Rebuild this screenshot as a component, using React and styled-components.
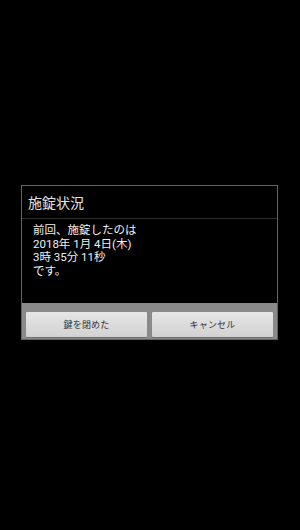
import styled, { createGlobalStyle } from "styled-components";

const GlobalStyle = createGlobalStyle`
  html, body {
    margin: 0;
    padding: 0;
    background: #000;
  }
  body {
    font-family: "Noto Sans CJK JP", "Roboto", sans-serif;
  }
`;

const Screen = styled.div`
  width: 300px;
  height: 530px;
  background: #000;
  padding: 185px 0 0 21px;
  box-sizing: border-box;
`;

const Dialog = styled.div`
  width: 257px;
  border: 1px solid #626262;
  box-sizing: border-box;
  background: #000;
  display: flex;
  flex-direction: column;
`;

const Title = styled.div`
  height: 32px;
  display: flex;
  align-items: center;
  padding-left: 6px;
  font-size: 14px;
  color: #e4e4e4;
  border-bottom: 1px solid #2e2e2e;
`;

const Body = styled.div`
  height: 84px;
  padding: 5px 0 0 11px;
  box-sizing: border-box;
  display: flex;
  flex-direction: column;
`;

const Line = styled.div`
  height: 13.7px;
  font-family: "Roboto", "Noto Sans CJK JP", sans-serif;
  font-size: 11.5px;
  line-height: 13.7px;
  color: #f0f0f0;
  white-space: nowrap;
`;

const ButtonBar = styled.div`
  background: #8a8a8a;
  display: flex;
  gap: 5px;
  padding: 9px 4px 2px 4px;
`;

const Button = styled.button`
  flex: 1;
  height: 25px;
  border: none;
  border-radius: 1px;
  background: linear-gradient(#e6e6e6, #d2d2d2);
  box-shadow: 0 1px 0 #6e6e6e;
  font-family: "Noto Sans CJK JP", sans-serif;
  font-size: 9px;
  letter-spacing: 0.2px;
  color: #333;
  padding: 0;
`;

const lines = ["前回、施錠したのは", "2018年 1月 4日(木)", "3時 35分 11秒", "です。"];

export default function App() {
  return (
    <>
      <GlobalStyle />
      <Screen>
        <Dialog>
          <Title>施錠状況</Title>
          <Body>
            {lines.map((text) => (
              <Line key={text}>{text}</Line>
            ))}
          </Body>
          <ButtonBar>
            <Button>鍵を閉めた</Button>
            <Button>キャンセル</Button>
          </ButtonBar>
        </Dialog>
      </Screen>
    </>
  );
}
